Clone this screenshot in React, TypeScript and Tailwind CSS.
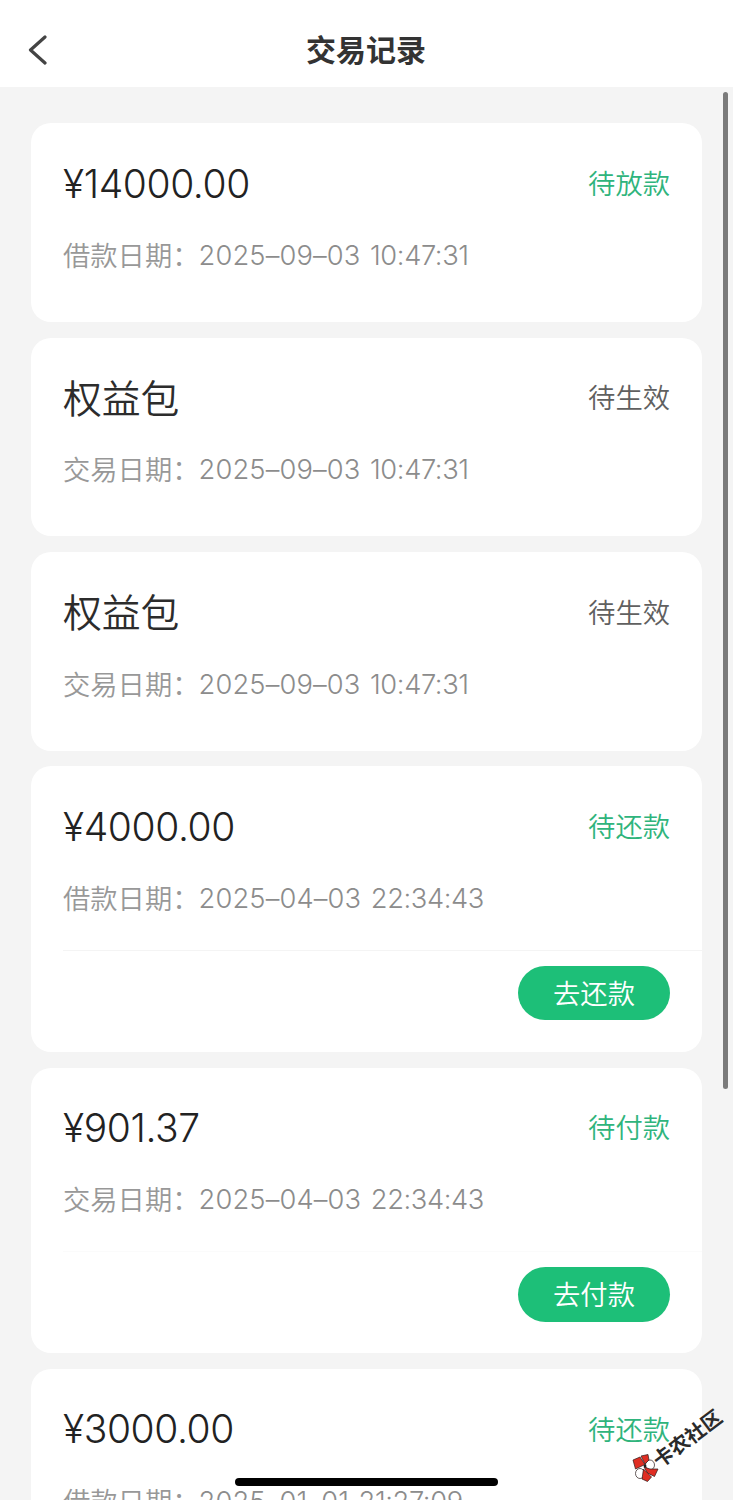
type RecordItem = {
  title: string;
  isAmount?: boolean;
  status: string;
  statusClass: string;
  label: string;
  date: string;
  time: string;
  action?: string;
  divider?: string;
};

const GREEN = "text-[#2fb47c]";
const GRAY = "text-[#606060]";

const records: RecordItem[] = [
  { title: "¥14000.00", isAmount: true, status: "待放款", statusClass: GREEN, label: "借款日期：", date: "2025–09–03", time: "10:47:31" },
  { title: "权益包", status: "待生效", statusClass: GRAY, label: "交易日期：", date: "2025–09–03", time: "10:47:31" },
  { title: "权益包", status: "待生效", statusClass: GRAY, label: "交易日期：", date: "2025–09–03", time: "10:47:31" },
  {
    title: "¥4000.00",
    isAmount: true,
    status: "待还款",
    statusClass: GREEN,
    label: "借款日期：",
    date: "2025–04–03",
    time: "22:34:43",
    action: "去还款",
    divider: "border-[#f4f4f4]",
  },
  {
    title: "¥901.37",
    isAmount: true,
    status: "待付款",
    statusClass: GREEN,
    label: "交易日期：",
    date: "2025–04–03",
    time: "22:34:43",
    action: "去付款",
    divider: "border-[#fbfbfb]",
  },
  {
    title: "¥3000.00",
    isAmount: true,
    status: "待还款",
    statusClass: GREEN,
    label: "借款日期：",
    date: "2025–01–01",
    time: "21:27:09",
    action: "去还款",
    divider: "border-[#f4f4f4]",
  },
];

function RecordCard({ item }: { item: RecordItem }) {
  return (
    <section
      className={`shrink-0 rounded-[20px] bg-white pl-8 pt-[31px] ${item.action ? "h-[285.4px]" : "h-[198.5px]"}`}
    >
      <div className="flex h-14 items-center justify-between pr-8">
        {item.isAmount ? (
          <h2 className="pt-[3px] font-[Inter] text-[39px] font-light tracking-[-0.4px] text-[#222]">{item.title}</h2>
        ) : (
          <h2 className="pb-0.5 text-[38.8px] font-[350] text-[#2c2c2c]">{item.title}</h2>
        )}
        <span className={`text-[27.3px] font-[350] ${item.statusClass}`}>{item.status}</span>
      </div>

      <div className="mt-6 flex h-10 items-center text-[27.3px] font-[350] text-[#989898]">
        <span>{item.label}</span>
        <p className="-ml-px flex gap-[9.5px] whitespace-nowrap pt-1 font-[Inter] font-light text-[#8c8c8c]">
          <span className="tracking-[0.15px]">{item.date}</span>
          <span className="tracking-[-0.4px]">{item.time}</span>
        </p>
      </div>

      {item.action && (
        <div className={`mt-[32.5px] flex justify-end border-t pr-8 pt-[15px] ${item.divider}`}>
          <button className="flex h-[54.5px] w-[152px] items-center justify-center rounded-full bg-[#1dbf78] pb-0.5 text-[27.3px] font-[350] text-white">
            {item.action}
          </button>
        </div>
      )}
    </section>
  );
}

function Watermark() {
  return (
    <div className="absolute left-[630px] top-[1400px] h-[100px] w-[103px]">
      <svg className="absolute left-0 top-[50px]" width="32" height="34" viewBox="0 0 32 34">
        <g stroke="#2a1a1a" strokeWidth="0.7" strokeLinejoin="round">
          <ellipse cx="20" cy="15" rx="4.500" ry="5" fill="#fff" />
          <ellipse cx="10" cy="23.500" rx="4.500" ry="5" fill="#fff" />
          <path d="M3 10 L10 7 L15 14.500 L5.500 19Z" fill="#e02d22" />
          <path d="M11 6 L18 4.500 L19 10 L15 14Z" fill="#e02d22" />
          <path d="M14 17 L20 19 L28 19 L24.500 26.500 L17.500 23Z" fill="#e02d22" />
          <path d="M13.500 19 L18 23.500 L21.500 27 L17.500 31.500 L12 29Z" fill="#e02d22" />
        </g>
        <circle cx="15" cy="16" r="1.400" fill="#1c1c1c" />
      </svg>
      <span className="absolute left-[17px] top-6 -rotate-37 whitespace-nowrap text-[20px] leading-[28px] font-bold text-[#2a2a2a]">
        卡农社区
      </span>
    </div>
  );
}

export default function App() {
  return (
    <div className="relative flex h-[1500px] w-[733px] flex-col overflow-hidden bg-[#f4f4f4] font-['Noto_Sans_CJK_SC',sans-serif]">
      <header className="flex h-[87px] shrink-0 items-center bg-white px-7 pt-3">
        <svg width="20" height="30" viewBox="0 0 20 30" fill="none" stroke="#444" strokeWidth="3.2" strokeLinecap="round" strokeLinejoin="round">
          <path d="M17 2 L2.500 15 L17 28" />
        </svg>
        <h1 className="flex-1 pr-[21px] pb-[3px] text-center text-[30px] font-bold text-[#333]">交易记录</h1>
      </header>

      <main className="flex min-h-0 flex-1 flex-col gap-[15.9px] px-[31px] pt-[36.3px]">
        {records.map((item, i) => (
          <RecordCard key={i} item={item} />
        ))}
      </main>

      {/* scrollbar */}
      <div className="absolute right-[5px] top-[92px] h-[997px] w-[5px] rounded-full bg-[#7b7b7b]" />

      <Watermark />

      {/* home indicator */}
      <div className="absolute left-[235px] top-[1478px] h-2 w-[263px] rounded-full bg-black" />
    </div>
  );
}
